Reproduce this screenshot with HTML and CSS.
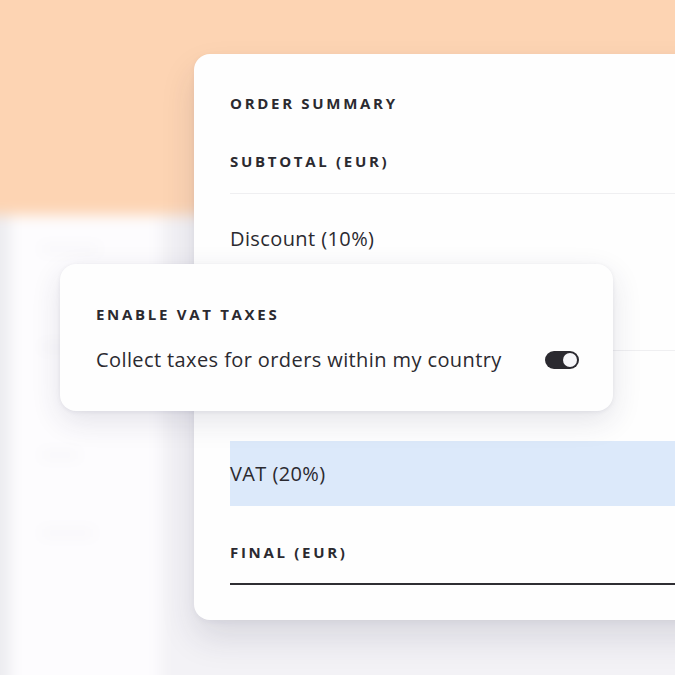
FILE: index.html
```html
<!DOCTYPE html>
<html>
<head>
<meta charset="utf-8">
<link rel="stylesheet" href="styles.css">
</head>
<body>
<div class="scene">
  <div class="backdrop">
    <div class="bd-top"></div>
    <div class="bd-body">
      <div class="bd-side">
        <span class="bd-line w1"></span>
        <span class="bd-line w2"></span>
        <span class="bd-line w3"></span>
        <span class="bd-line w4"></span>
      </div>
      <div class="bd-main"></div>
    </div>
  </div>

  <section class="summary">
    <h2 class="label">ORDER SUMMARY</h2>
    <div class="row-subtotal"><span class="label">SUBTOTAL (EUR)</span></div>
    <div class="row-discount"><span class="text">Discount (10%)</span></div>
    <div class="row-vat"><span class="text">VAT (20%)</span></div>
    <div class="row-final"><span class="label">FINAL (EUR)</span></div>
  </section>

  <div class="popover">
    <div class="label">ENABLE VAT TAXES</div>
    <div class="pop-row">
      <span class="text">Collect taxes for orders within my country</span>
      <span class="toggle"><span class="knob"></span></span>
    </div>
  </div>
</div>
</body>
</html>
```

FILE: styles.css
```css
* { box-sizing: border-box; }
html, body { margin: 0; padding: 0; }
body {
  width: 675px;
  height: 675px;
  overflow: hidden;
  font-family: "Open Sans", Lato, sans-serif;
  color: #2b2a30;
  background: #f3f2f6;
}
.scene {
  position: relative;
  width: 675px;
  height: 675px;
  overflow: hidden;
  padding-top: 54px;
  padding-left: 194px;
}
.backdrop {
  position: absolute;
  inset: -20px;
  display: flex;
  flex-direction: column;
  filter: blur(7px);
}
.bd-top {
  height: 235px;
  background: #fdd4b3;
  flex: none;
}
.bd-body {
  flex: 1;
  display: flex;
}
.bd-side {
  width: 180px;
  background: #fdfcfe;
  border-left: 30px solid #ececf0;
  display: flex;
  flex-direction: column;
  padding: 30px 0 0 30px;
  gap: 70px;
}
.bd-line {
  display: block;
  height: 8px;
  background: #f7f6f9;
  border-radius: 4px;
}
.w1 { width: 60px; }
.w2 { width: 70px; margin-top: 20px; }
.w3 { width: 40px; margin-top: 30px; }
.w4 { width: 55px; }
.bd-main {
  flex: 1;
  background: #f3f2f6;
}

.label {
  display: block;
  margin: 0;
  font-size: 15px;
  font-weight: 700;
  letter-spacing: 2.7px;
  line-height: 20px;
}
.text {
  display: block;
  font-size: 20px;
  line-height: 24px;
  font-weight: 400;
  letter-spacing: 0.4px;
}

.summary {
  position: relative;
  width: 620px;
  height: 566px;
  background: #fefefe;
  border-radius: 16px 0 0 16px;
  padding: 39px 0 0 36px;
  box-shadow: 0 18px 34px rgba(40, 40, 70, 0.13), 0 2px 6px rgba(40, 40, 70, 0.05);
}
.row-subtotal {
  margin-top: 38px;
  padding-bottom: 22px;
  border-bottom: 1px solid #efeff1;
}
.row-discount {
  padding-top: 33px;
  height: 157px;
  border-bottom: 1px solid #efeff1;
}
.row-vat {
  margin-top: 90px;
  height: 65px;
  background: #dce9fa;
  display: flex;
  align-items: center;
}
.row-final {
  margin-top: 36px;
  padding-bottom: 21px;
  border-bottom: 2px solid #2f2e33;
}

.popover {
  position: absolute;
  left: 60px;
  top: 264px;
  width: 553px;
  height: 147px;
  background: #fefefe;
  border-radius: 16px;
  padding: 40px 34px 0 36px;
  box-shadow: 0 10px 30px rgba(40, 40, 80, 0.12), 0 1px 4px rgba(40, 40, 80, 0.08);
}
.pop-row {
  margin-top: 24px;
  display: flex;
  align-items: center;
  justify-content: space-between;
}
.toggle {
  width: 34px;
  height: 18px;
  border-radius: 9px;
  background: #2b2a30;
  display: flex;
  align-items: center;
  justify-content: flex-end;
  padding-right: 2px;
}
.knob {
  width: 14px;
  height: 14px;
  border-radius: 50%;
  background: #f7f7fa;
}
```
